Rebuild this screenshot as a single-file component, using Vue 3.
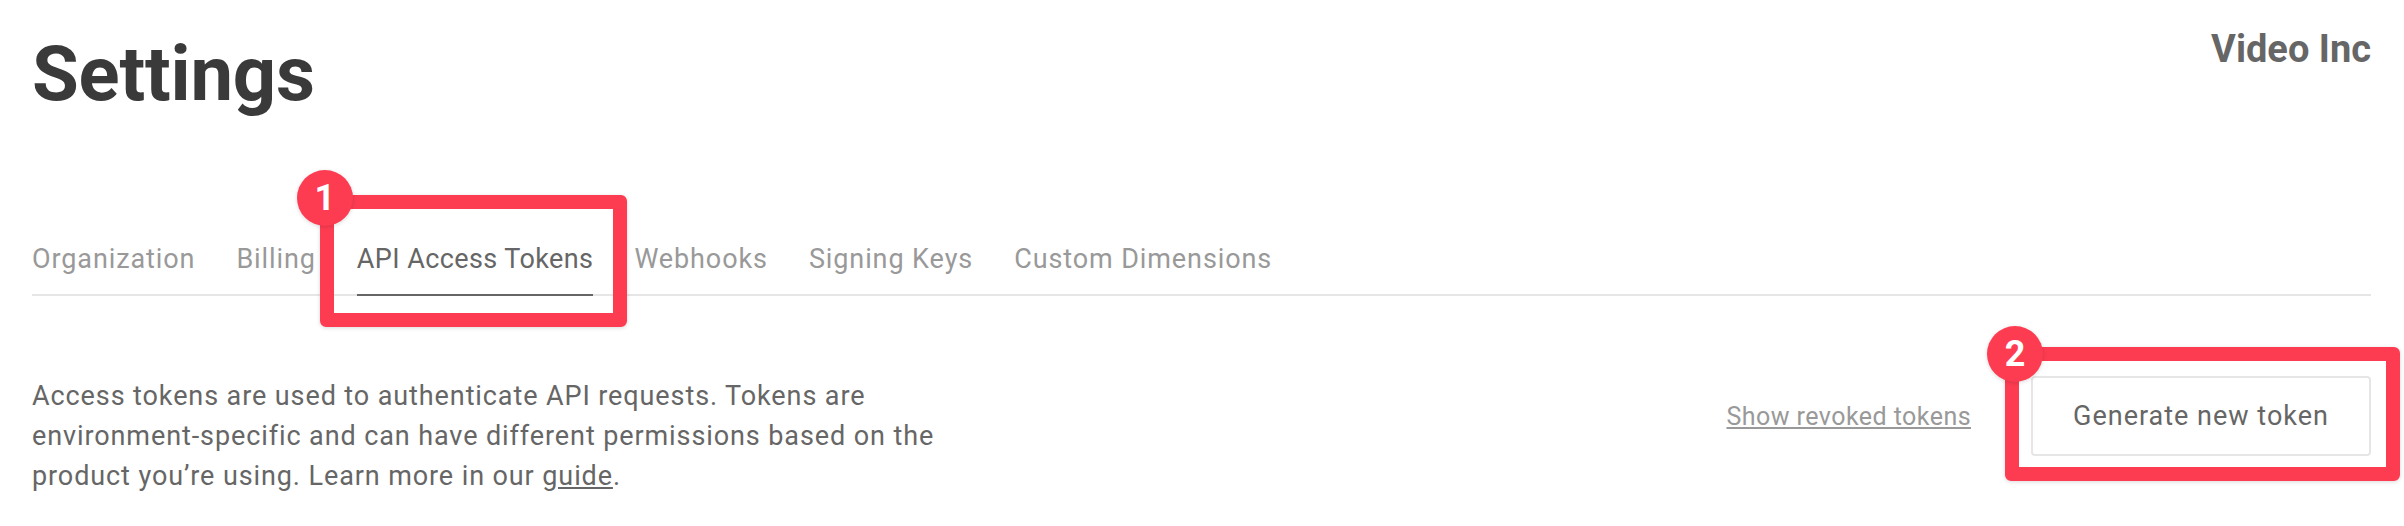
<template>
  <div class="page">
    <!-- header -->
    <header class="top">
      <h1 class="title">Settings</h1>
      <div class="org">Video Inc</div>
    </header>

    <!-- tabs -->
    <nav class="tabs">
      <a
        v-for="tab in tabs"
        :key="tab"
        class="tab"
        :class="{ active: tab === activeTab }"
      >
        {{ tab }}
        <span v-if="tab === activeTab" class="callout callout-tab">
          <span class="badge">1</span>
        </span>
      </a>
    </nav>

    <!-- content -->
    <section class="content">
      <p class="intro">
        Access tokens are used to authenticate API requests. Tokens are
        environment-specific and can have different permissions based on the
        product you’re using. Learn more in our <a class="guide">guide</a>.
      </p>
      <div class="actions">
        <a class="revoked">Show revoked tokens</a>
        <button class="generate">
          Generate new token
          <span class="callout callout-button">
            <span class="badge badge-two">2</span>
          </span>
        </button>
      </div>
    </section>
  </div>
</template>

<script setup>
const activeTab = 'API Access Tokens';
const tabs = [
  'Organization',
  'Billing',
  'API Access Tokens',
  'Webhooks',
  'Signing Keys',
  'Custom Dimensions'
];
</script>

<style>
html,
body {
  background: #fff;
}
</style>

<style scoped>
.page {
  padding: 0 33px 0 32px;
  font-family: Roboto, "Liberation Sans", sans-serif;
  color: #666;
}

.top {
  display: flex;
  justify-content: space-between;
  align-items: flex-start;
  height: 194px;
}

.title {
  margin: 32px 0 0;
  font-size: 76px;
  line-height: 84px;
  font-weight: 700;
  letter-spacing: -0.2px;
  color: #3a3a3a;
}

.org {
  margin-top: 27px;
  font-size: 38px;
  line-height: 44px;
  font-weight: 700;
  letter-spacing: 0;
}

.tabs {
  display: flex;
  gap: 41px;
  padding-top: 49px;
  border-bottom: 2px solid #e6e6e6;
}

.tab {
  position: relative;
  margin-bottom: -2px;
  padding-bottom: 19px;
  border-bottom: 2px solid transparent;
  font-size: 27px;
  line-height: 32px;
  letter-spacing: 0.9px;
  color: #999;
}

.tab.active {
  border-bottom-color: #666;
  letter-spacing: 0.4px;
  color: #666;
}

.content {
  display: flex;
  justify-content: space-between;
  align-items: flex-start;
  padding-top: 80px;
}

.intro {
  width: 930px;
  margin: 0;
  font-size: 27px;
  line-height: 40px;
  letter-spacing: 0.9px;
}

.guide {
  text-decoration: underline;
}

.actions {
  display: flex;
  align-items: center;
  gap: 60px;
}

.revoked {
  font-size: 25px;
  letter-spacing: 0.45px;
  color: #999;
  text-decoration: underline;
}

.generate {
  position: relative;
  width: 340px;
  height: 80px;
  padding: 0;
  background: #fff;
  border: 2px solid #e6e6e6;
  border-radius: 4px;
  font-family: inherit;
  font-size: 27px;
  letter-spacing: 1px;
  color: #666;
}

/* red annotation frames */
.callout {
  position: absolute;
  border: 14px solid #fd3c52;
  border-radius: 6px;
  box-shadow: 0 1px 4px rgba(0, 0, 0, 0.15);
}

.callout-tab {
  top: -48px;
  right: -34px;
  bottom: -33px;
  left: -37px;
}

.callout-button {
  top: -31px;
  right: -31px;
  bottom: -27px;
  left: -28px;
}

.badge {
  position: absolute;
  top: -39px;
  left: -37px;
  display: flex;
  align-items: center;
  justify-content: center;
  width: 56px;
  height: 56px;
  border-radius: 50%;
  background: #fd3c52;
  box-shadow: 0 1px 4px rgba(0, 0, 0, 0.15);
  font-size: 36px;
  font-weight: 700;
  letter-spacing: 0;
  color: #fff;
}

.badge-two {
  top: -35px;
  left: -32px;
}
</style>
